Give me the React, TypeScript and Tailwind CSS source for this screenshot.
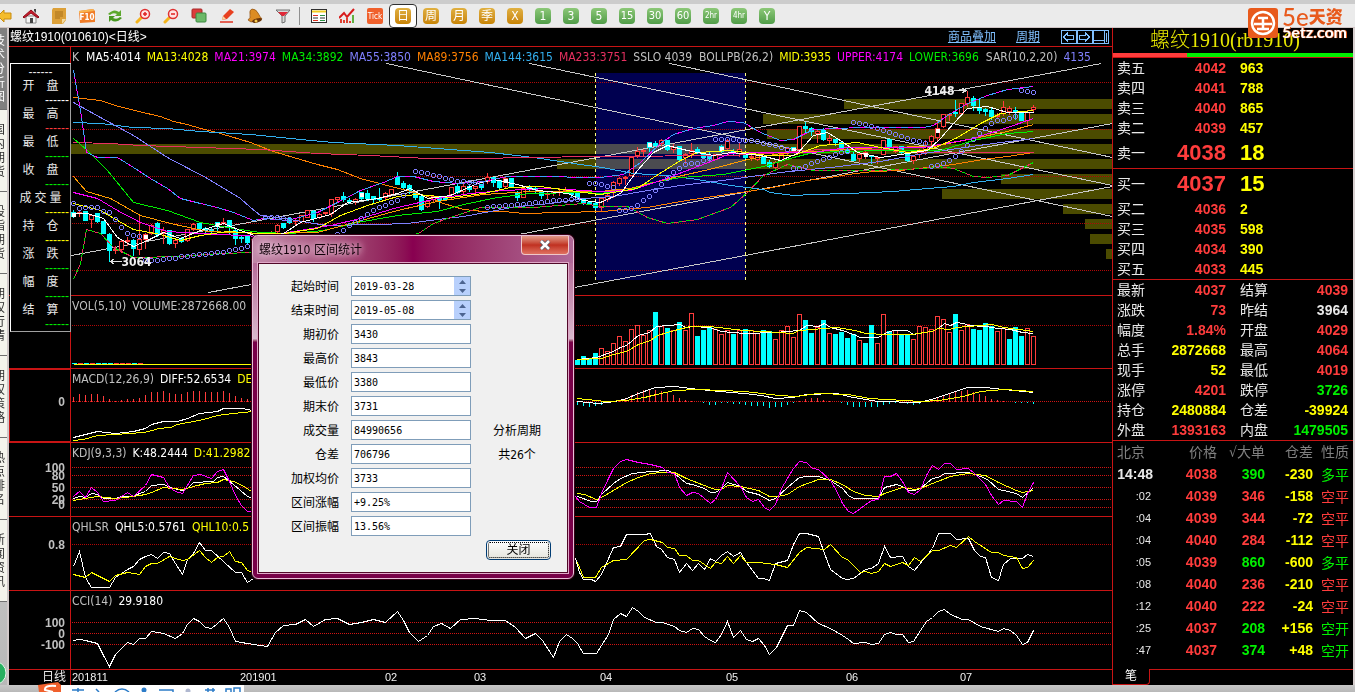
import React from "react";

const FIRST_X = 73;
const STEP = 6;
const VISIBLE_FROM = 84;

const UP = "#ff3c3c";
const DOWN = "#00ffff";

// high, top, bottom, low, 1 = up / 0 = down
const CANDLES: number[][] = [
  [209, 212, 216, 217, 0], [210, 212, 213, 216, 1], [211, 211, 220, 220, 0], [215, 215, 219, 227, 1],
  [213, 213, 221, 222, 0], [220, 221, 233, 233, 0], [232, 234, 250, 261, 0], [245, 249, 250, 253, 1],
  [238, 241, 249, 252, 1], [236, 240, 241, 245, 1], [238, 240, 248, 255, 0], [215, 239, 249, 254, 1],
  [232, 234, 239, 248, 1], [223, 225, 233, 234, 1], [221, 223, 234, 236, 0], [226, 230, 233, 243, 1],
  [229, 230, 243, 244, 0], [239, 240, 243, 247, 1], [236, 238, 241, 242, 0], [228, 229, 240, 241, 1],
  [222, 224, 229, 230, 1], [221, 223, 228, 229, 0], [226, 228, 229, 233, 0], [227, 230, 231, 233, 0],
  [221, 222, 226, 232, 0], [217, 222, 223, 224, 1], [219, 220, 227, 233, 0], [228, 230, 238, 244, 0],
  [235, 237, 238, 242, 0], [235, 236, 242, 243, 0], [238, 239, 242, 243, 1], [238, 239, 242, 243, 0],
  [237, 238, 240, 241, 1], [230, 232, 234, 236, 1], [223, 225, 231, 233, 1], [222, 223, 227, 228, 0],
  [216, 218, 222, 223, 0], [217, 220, 221, 224, 1], [214, 215, 221, 222, 1], [209, 210, 217, 217, 1],
  [209, 211, 218, 221, 0], [212, 214, 217, 218, 1], [211, 212, 213, 215, 1], [198, 199, 213, 216, 1],
  [196, 197, 199, 201, 1], [191, 196, 199, 201, 0], [197, 200, 201, 203, 0], [197, 199, 201, 204, 1],
  [191, 192, 198, 200, 0], [189, 193, 198, 200, 0], [195, 196, 199, 202, 0], [187, 198, 199, 200, 0],
  [191, 193, 197, 200, 1], [188, 189, 194, 195, 1], [171, 177, 184, 184, 0], [180, 183, 187, 188, 0],
  [183, 185, 190, 193, 0], [190, 192, 197, 199, 0], [194, 196, 209, 210, 0], [199, 201, 206, 207, 1],
  [194, 196, 199, 201, 1], [196, 197, 200, 208, 0], [195, 197, 199, 200, 0], [186, 187, 194, 198, 1],
  [183, 186, 192, 193, 0], [183, 186, 191, 193, 1], [184, 186, 189, 191, 0], [185, 186, 188, 192, 1],
  [183, 184, 187, 189, 0], [172, 177, 181, 183, 1], [176, 177, 182, 186, 0], [179, 180, 187, 188, 0],
  [176, 178, 186, 187, 1], [178, 178, 186, 186, 0], [190, 192, 197, 200, 0], [187, 188, 197, 197, 1],
  [184, 186, 188, 191, 0], [186, 188, 189, 193, 0], [189, 192, 195, 198, 0], [191, 193, 194, 198, 1],
  [190, 192, 193, 195, 1], [187, 191, 192, 195, 1], [186, 190, 191, 193, 1], [190, 193, 194, 197, 0],
  [190, 191, 197, 199, 0], [197, 198, 203, 204, 0], [200, 202, 203, 204, 0], [201, 203, 207, 209, 0],
  [196, 198, 207, 211, 1], [193, 195, 199, 201, 1], [180, 182, 190, 197, 1], [176, 178, 183, 185, 1],
  [175, 177, 178, 184, 1], [155, 157, 175, 175, 1], [146, 151, 155, 157, 1], [148, 150, 151, 155, 1],
  [141, 142, 147, 151, 0], [140, 143, 145, 146, 0], [138, 140, 143, 145, 1], [139, 140, 149, 150, 0],
  [143, 147, 149, 152, 1], [145, 146, 159, 160, 0], [152, 154, 157, 163, 1], [142, 150, 153, 157, 1],
  [146, 149, 152, 153, 0], [153, 154, 157, 158, 0], [150, 156, 158, 160, 0], [153, 154, 159, 159, 1],
  [144, 146, 151, 152, 0], [138, 140, 148, 149, 1], [148, 151, 153, 155, 0], [142, 149, 153, 156, 1],
  [151, 153, 157, 158, 0], [153, 156, 157, 160, 1], [153, 154, 159, 160, 1], [155, 156, 163, 163, 0],
  [159, 162, 166, 167, 0], [160, 162, 167, 168, 1], [153, 154, 160, 161, 1], [146, 148, 151, 155, 1],
  [146, 147, 150, 152, 0], [125, 126, 149, 150, 1], [121, 126, 128, 133, 0], [126, 128, 131, 135, 0],
  [128, 131, 133, 142, 1], [127, 130, 139, 140, 0], [134, 138, 140, 144, 1], [138, 139, 142, 145, 0],
  [141, 142, 148, 149, 0], [146, 149, 152, 153, 0], [151, 154, 160, 160, 0], [151, 154, 158, 161, 1],
  [150, 152, 154, 158, 1], [154, 155, 156, 163, 0], [155, 157, 158, 163, 1], [139, 140, 154, 154, 1],
  [138, 139, 147, 148, 0], [146, 146, 151, 152, 1], [145, 146, 152, 153, 0], [152, 153, 160, 161, 0],
  [154, 156, 160, 163, 1], [148, 150, 154, 157, 1], [139, 146, 150, 154, 1], [134, 136, 141, 145, 1],
  [120, 128, 137, 140, 1], [114, 114, 126, 127, 1], [112, 114, 115, 120, 1], [99, 112, 113, 116, 0],
  [102, 103, 113, 113, 1], [90, 97, 103, 106, 1], [95, 98, 105, 110, 0], [98, 108, 110, 113, 0],
  [107, 109, 111, 115, 0], [106, 110, 116, 119, 0], [112, 115, 116, 118, 1], [100, 107, 113, 115, 1],
  [105, 108, 111, 114, 1], [106, 110, 112, 119, 0], [110, 111, 120, 120, 0], [109, 112, 120, 125, 1],
  [104, 107, 109, 111, 1],
];

// candles marked with a white block
const MARKED = [0, 12, 24, 48, 72, 96, 108, 120, 132, 144];

// parabolic stop, one value per candle, 0 = not drawn
const SAR = [
  203, 208, 207, 207, 207, 211, 212, 219, 227, 233, 235, 236, 260, 260, 260, 259, 258, 258, 256, 256,
  255, 254, 254, 253, 252, 252, 250, 249, 248, 246, 0, 0, 217, 217, 217, 218, 219, 0, 0, 0,
  0, 0, 0, 0, 234, 230, 225, 222, 218, 214, 210, 207, 205, 202, 200, 195, 0, 171, 172, 173,
  175, 176, 178, 179, 181, 181, 182, 182, 183, 207, 206, 206, 205, 205, 204, 204, 203, 202, 202, 201,
  200, 200, 200, 199, 199, 0, 183, 183, 184, 186, 187, 210, 210, 208, 205, 200, 196, 190, 184, 178,
  172, 168, 164, 163, 163, 160, 158, 139, 139, 139, 139, 140, 140, 140, 141, 143, 144, 145, 147, 149,
  168, 168, 166, 163, 161, 159, 157, 154, 152, 151, 122, 123, 124, 126, 128, 130, 132, 134, 136, 138,
  140, 141, 143, 166, 165, 163, 160, 156, 151, 145, 139, 133, 128, 123, 120, 120, 118, 116, 90, 91,
  92,
];

const BANDS = [
  [844, 99], [763, 114], [767, 129], [71, 144], [557, 159], [1001, 174],
  [942, 189], [1063, 204], [1085, 219], [1090, 234], [1106, 249],
];

const TREND_LINES = [
  "386,63 1112,216",
  "529,63 1112,185",
  "669,63 1112,157",
  "71,255 1101,63",
  "208,292 1112,123",
  "574,287 1112,186",
];

const UPPER_LINE =
  "73,70 80,110 86,152 97,157 117,157 133,167 150,178 167,188 180,198 200,203 217,207 233,212 253,220 263,218 287,220 317,212 337,202 360,190 383,182 397,176 413,176 433,181 457,183 483,181 507,176 550,176 583,177 600,177 623,174 640,162 660,143 673,134 693,128 713,125 727,121 743,122 760,132 780,140 793,139 813,129 860,127 923,127 933,125 947,115 967,103 987,95 1007,89 1033,86";
const LOWER_LINE =
  "73,279 80,263 86,229 100,233 113,247 133,257 180,256 220,253 253,252 330,250 418,233 433,223 450,217 480,207 533,207 583,203 600,206 627,206 647,217 667,223 697,219 730,207 747,192 763,175 787,164 813,170 880,170 923,168 937,166 953,168 973,176 987,177 1007,175 1033,162";

const PRICE_LINES: [string, string][] = [
  ["#ff8000", "73,97 100,100 115,105 138,111 160,116 173,121 187,124 200,128 213,131 230,136 250,142 273,151 293,157 317,164 337,169 360,178 383,184 410,191 427,196 443,203 463,209 483,211 503,211 523,213 560,212 602,211 623,209 647,207 680,201 713,196 747,191 767,188 787,184 807,180 830,177 847,174 873,171 900,170 927,167 953,164 983,159 1007,156 1033,152"],
  ["#33b0f0", "73,122 100,123 133,127 167,128 200,131 250,134 300,139 333,142 397,145 450,149 490,152 533,157 560,161 580,164 602,167 633,173 667,175 697,179 730,185 763,189 770,192 793,195 813,194 847,193 893,191 927,188 953,186 973,182 1007,178 1033,174"],
  ["#e83060", "73,142 110,143 140,145 200,147 260,149 317,153 370,155 427,158 483,158 523,157 600,156 730,155 767,153 820,149 900,149 907,152 1033,152"],
  ["#8080ff", "73,102 100,117 133,135 167,157 207,178 240,198 250,207 260,215 283,218 307,222 327,225 377,224 407,223 437,219 463,216 490,211 517,206 550,203 583,198 613,196 647,190 680,185 730,179 780,172 830,167 880,161 923,153 957,148 1000,142 1033,138"],
  ["#00f000", "73,138 87,150 107,170 133,202 167,210 200,222 233,228 260,232 290,233 323,230 357,222 397,215 437,211 463,204 497,197 530,193 583,192 600,193 630,189 647,183 680,177 723,174 763,166 793,157 813,152 880,150 940,150 973,140 1007,133 1033,131"],
  ["#ff9c00", "73,176 86,191 110,198 140,215 170,223 207,231 260,233 317,232 350,223 397,210 437,201 483,194 530,191 600,191 630,188 673,177 713,168 747,159 780,153 830,150 880,147 933,146 973,138 1007,131 1033,124"],
  ["#ff00ff", "73,192 97,198 117,210 140,222 167,231 200,233 260,236 300,230 330,225 360,218 397,207 437,198 470,193 503,190 550,188 600,191 630,190 663,179 713,160 730,153 767,152 813,152 847,147 923,147 973,138 1007,127 1033,118"],
  ["#ffff00", "73,203 100,210 117,220 133,229 160,234 180,240 200,235 227,231 260,233 283,233 317,228 340,215 367,205 397,196 417,194 450,197 483,193 510,187 540,186 583,192 600,194 637,188 653,177 680,160 697,152 730,150 767,155 793,155 820,145 857,142 880,147 907,152 933,148 957,137 980,123 1000,113 1033,110"],
  ["#ffffff", "73,213 87,213 103,218 117,237 133,246 147,240 163,232 180,238 200,230 223,223 240,230 260,237 283,233 300,222 330,214 347,202 377,198 397,193 410,188 427,198 450,195 477,183 493,179 517,184 537,190 567,193 583,200 600,202 620,193 637,170 653,152 667,145 687,150 713,155 730,152 760,155 780,160 797,153 813,135 827,132 843,142 857,152 880,157 907,153 927,150 940,138 953,123 967,108 987,106 1007,112 1033,112"],
];

// bar top, 1 = up / 0 = down, starting at candle 84
const VOLUME: number[][] = [
  [360, 0], [356, 0], [359, 0], [353, 0], [348, 1], [351, 1], [343, 1], [336, 1], [341, 1], [329, 1],
  [325, 1], [335, 1], [330, 1], [312, 0], [326, 1], [328, 0], [330, 1], [322, 0], [330, 1], [313, 1],
  [336, 0], [330, 0], [326, 0], [329, 1], [334, 1], [330, 1], [334, 0], [330, 1], [329, 0], [330, 1],
  [333, 1], [330, 0], [331, 0], [339, 1], [330, 1], [326, 1], [337, 1], [314, 1], [320, 0], [333, 0],
  [327, 1], [320, 0], [333, 1], [334, 0], [332, 0], [338, 0], [334, 0], [340, 1], [343, 0], [325, 0],
  [343, 1], [314, 1], [331, 0], [330, 1], [334, 0], [335, 0], [339, 1], [326, 1], [327, 1], [329, 1],
  [316, 1], [319, 1], [332, 1], [314, 0], [330, 1], [324, 1], [329, 0], [330, 0], [323, 0], [326, 0],
  [331, 1], [328, 1], [339, 0], [327, 0], [336, 0], [328, 1], [336, 1],
];

const MACD_LEFT = [
  5, 8, 7, 8, 8, 6, 3, 1, 2, 3, 3, 4, 7, 10, 10, 11, 9, 8, 8, 10, 11, 11, 10, 10, 10, 11, 9, 6, 4, 3,
];
const MACD_RIGHT = [
  -3, -4, -5, -4, -3, -1, 0, 2, 3, 7, 10, 12, 12, 12, 11, 10, 7, 4, 2, 1, 0, -1, -3, -3, -1, -1, -2,
  -2, -3, -4, -4, -4, -6, -5, -5, -3, -1, 1, 3, 4, 4, 2, 1, 0, -1, -3, -5, -5, -5, -5, -5, -3, -2,
  -1, -1, -2, -3, -2, 1, 2, 4, 6, 8, 10, 11, 12, 10, 8, 6, 3, 2, 1, 0, -1, -1, -1, -2,
];

const VOL_LINES: [string, string][] = [
  ["#ffff00", "73,364 252,364"],
  ["#ffffff", "577,359 596,357 613,351 620,347 626,345 632,340 638,335 649,332 656,326 679,324 686,327 692,326 709,327 721,331 744,333 775,332 799,330 806,325 818,326 824,323 830,327 842,330 853,334 860,337 878,337 884,333 893,330 907,330 913,334 931,331 938,328 944,323 950,325 956,322 963,323 968,325 985,326 998,328 1010,329 1022,332 1033,333"],
  ["#ffff00", "577,359 601,358 613,354 626,351 638,344 650,340 657,335 674,330 690,326 709,326 744,330 779,332 792,333 799,330 836,327 855,330 865,333 885,334 911,334 931,331 938,328 949,329 956,327 991,324 1004,327 1033,331"],
];

const MACD_LINES: [string, string][] = [
  ["#ffffff", "73,437 85,434 97,431 115,433 133,431 145,428 151,424 163,421 177,421 187,418 199,413 217,411 223,408 242,408 252,410"],
  ["#ffff00", "73,440 83,439 97,435 115,434 143,432 152,430 158,428 170,427 177,424 193,421 203,419 217,415 233,413 252,411"],
  ["#ffffff", "577,401 598,403 615,401 626,398 638,393 655,387 674,386 699,389 719,391 744,393 761,395 775,398 792,397 806,394 836,393 853,397 878,401 918,402 931,399 949,393 967,387 985,387 1003,389 1033,392"],
  ["#ffff00", "577,398 605,401 626,400 644,397 656,394 674,390 697,389 744,391 779,395 796,396 817,393 848,394 869,398 921,401 938,400 963,396 980,391 1004,389 1033,391"],
];

const KDJ_LINES: [string, string][] = [
  ["#ffffff", "73,498 79,496 85,497 91,493 97,494 103,498 115,498 121,496 133,496 139,493 145,491 151,485 163,484 173,488 182,490 187,488 193,482 213,481 217,477 223,476 233,484 247,496 252,498"],
  ["#ffff00", "73,500 85,498 97,496 115,498 133,496 145,494 151,492 163,487 182,489 193,486 205,483 217,482 223,479 233,481 242,485 251,491"],
  ["#ff00ff", "73,496 79,491 85,497 91,487 97,492 103,501 115,500 121,496 127,492 133,496 145,485 151,474 163,477 169,487 175,491 182,493 193,475 200,474 211,478 217,471 223,469 229,481 235,495 241,505 247,511 252,511"],
  ["#ffffff", "577,496 591,501 596,501 601,494 613,483 620,478 632,473 650,471 667,470 674,473 686,483 692,484 704,488 710,492 715,492 721,488 727,482 740,486 746,491 758,494 769,500 775,498 787,487 799,477 806,476 818,476 830,480 842,488 848,495 853,498 878,498 884,487 896,484 902,486 908,490 914,490 920,488 932,478 938,477 944,473 968,472 980,476 987,479 998,489 1003,490 1016,493 1022,497 1033,487"],
  ["#ffff00", "577,493 584,494 596,499 601,497 613,490 626,482 638,477 650,473 662,472 674,472 686,478 709,487 715,489 721,489 727,485 740,486 758,490 769,496 777,496 787,494 799,486 818,479 830,479 842,484 853,491 865,495 878,496 884,493 902,487 914,489 920,488 932,483 950,476 968,473 985,475 998,482 1016,490 1022,492 1033,490"],
  ["#ff00ff", "575,496 579,501 589,507 596,507 601,493 608,478 613,468 620,461 626,459 638,462 650,464 662,467 667,472 674,473 679,487 686,495 692,492 698,493 710,503 715,499 721,488 727,472 740,486 746,497 752,501 758,499 764,507 769,510 775,504 781,488 793,468 799,461 806,462 812,468 818,469 830,480 836,490 842,503 848,511 853,513 860,508 871,500 878,499 884,476 890,476 896,473 902,481 908,492 914,494 920,489 926,475 932,465 938,469 944,463 950,463 956,469 968,468 974,473 985,484 991,495 998,504 1003,500 1016,501 1022,507 1027,493 1033,482"],
];

const QHL_LINES: [string, string][] = [
  ["#ffffff", "73,566 79,551 85,577 91,587 109,587 115,577 127,569 133,566 139,559 145,556 151,554 157,558 163,552 169,553 175,563 182,574 187,559 193,553 199,542 205,550 211,550 235,572 241,572 247,582 253,578"],
  ["#ffff00", "73,574 85,577 91,572 109,581 115,575 127,572 139,574 145,566 151,563 157,563 169,556 175,558 182,560 187,559 199,550 205,557 211,562 217,557 223,556 229,551 235,561 241,562 247,570 252,572"],
  ["#ffffff", "575,558 579,572 583,579 591,579 595,581 601,574 613,547 620,546 626,534 644,534 650,533 656,546 661,549 667,557 674,559 679,572 686,563 692,570 698,563 704,569 710,558 715,561 721,555 727,551 733,556 740,552 746,562 758,578 763,578 769,580 775,563 787,560 793,544 799,533 806,533 818,536 824,553 830,569 842,578 847,579 853,578 865,569 871,568 878,563 884,546 890,557 902,556 908,566 914,570 932,548 938,533 950,533 956,539 968,538 974,550 980,556 985,557 991,577 998,580 1003,564 1010,558 1022,558 1027,554 1033,556"],
  ["#ffff00", "577,562 583,577 595,577 601,567 613,560 626,559 644,540 650,539 662,542 667,547 674,548 679,555 686,555 692,560 698,560 710,568 715,562 721,563 727,556 733,563 740,555 746,562 758,562 775,564 787,567 799,552 806,547 824,549 830,544 842,557 847,559 860,572 865,571 871,573 878,571 884,563 890,566 902,562 908,565 914,557 920,561 932,550 938,550 950,545 956,547 968,536 974,541 991,552 998,552 1003,555 1016,557 1022,568 1027,567 1033,560"],
];

const CCI_LINES: [string, string][] = [
  ["#ffffff", "73,640 79,639 85,640 97,643 103,655 109,666 115,654 127,642 133,644 139,638 145,638 151,631 163,633 175,638 182,633 187,624 193,618 199,621 205,627 211,628 217,623 223,618 229,627 235,641 247,643 260,645 267,646 275,632 283,625 295,624 305,619 313,626 325,619 337,618 349,624 361,622 373,619 385,622 397,611 403,620 409,632 418,641 427,635 433,626 441,623 450,628 460,619 475,618 490,620 505,620 515,627 525,638 535,633 542,640 553,657 559,641 566,634 572,638 577,643 583,653 596,653 608,634 613,619 620,613 626,616 632,607 638,611 644,617 656,622 662,622 674,626 679,630 686,632 692,628 698,629 704,636 710,640 715,642 721,634 727,621 733,637 740,630 746,639 752,641 758,638 764,645 769,654 776,647 787,625 793,625 799,610 806,612 818,623 830,628 842,635 848,639 853,643 865,642 871,644 878,643 884,634 890,632 896,634 902,634 908,642 913,641 920,630 926,621 932,617 938,611 944,609 950,614 962,619 968,619 980,626 998,631 1003,628 1010,630 1016,635 1022,644 1027,642 1033,630"],
];

const LEGEND_PRICE: [string, string][] = [
  ["K", "pr-px text-[#c0c0c0]"],
  ["MA5:4014", "text-white"],
  ["MA13:4028", "text-[#ffff00]"],
  ["MA21:3974", "text-[#ff00ff]"],
  ["MA34:3892", "text-[#00f000]"],
  ["MA55:3850", "text-[#8080ff]"],
  ["MA89:3756", "text-[#ff8000]"],
  ["MA144:3615", "text-[#33b0f0]"],
  ["MA233:3751", "text-[#e83060]"],
  ["SSLO 4039", "pr-px text-[#c0c0c0]"],
  ["BOLLPB(26,2)", "text-[#c0c0c0]"],
  ["MID:3935", "text-[#ffff00]"],
  ["UPPER:4174", "text-[#ff00ff]"],
  ["LOWER:3696", "text-[#00f000]"],
  ["SAR(10,2,20)", "pl-px text-[#c0c0c0]"],
  ["4135", "text-[#8080ff]"],
];

const TIP_ROWS: [string, string][] = [
  ["开盘", "text-white"],
  ["最高", "text-[#ff3c3c]"],
  ["最低", "text-[#00f000]"],
  ["收盘", "text-[#00f000]"],
  ["成交量", "text-[#ffff00]"],
  ["持仓", "text-[#ffff00]"],
  ["涨跌", "text-[#00f000]"],
  ["幅度", "text-[#00f000]"],
  ["结算", "text-[#00f000]"],
];

const SELLS = [["卖五", "4042", "963"], ["卖四", "4041", "788"], ["卖三", "4040", "865"], ["卖二", "4039", "457"], ["卖一", "4038", "18"]];
const BUYS = [["买一", "4037", "15"], ["买二", "4036", "2"], ["买三", "4035", "598"], ["买四", "4034", "390"], ["买五", "4033", "445"]];

const RED = "text-[#ff3c3c]";
const GREEN = "text-[#00f000]";
const YELLOW = "text-[#ffff00]";

const STATS = [
  ["最新", "4037", RED, "结算", "4039", RED],
  ["涨跌", "73", RED, "昨结", "3964", "text-[#e8e8e8]"],
  ["幅度", "1.84%", RED, "开盘", "4029", RED],
  ["总手", "2872668", YELLOW, "最高", "4064", RED],
  ["现手", "52", YELLOW, "最低", "4019", RED],
  ["涨停", "4201", RED, "跌停", "3726", GREEN],
  ["持仓", "2480884", YELLOW, "仓差", "-39924", YELLOW],
  ["外盘", "1393163", RED, "内盘", "1479505", GREEN],
];

const TICKS = [
  ["14:48", "4038", "390", GREEN, "-230", "多平", GREEN],
  [":02", "4039", "346", RED, "-158", "空平", RED],
  [":04", "4039", "344", RED, "-72", "空平", RED],
  [":04", "4040", "284", RED, "-112", "空平", RED],
  [":05", "4039", "860", GREEN, "-600", "多平", GREEN],
  [":08", "4040", "236", RED, "-210", "空平", RED],
  [":12", "4040", "222", RED, "-24", "空平", RED],
  [":25", "4037", "208", GREEN, "+156", "空开", GREEN],
  [":47", "4037", "374", GREEN, "+48", "空开", GREEN],
];

const SIDE_TABS = ["技术分析图", "国内期货", "股指期货", "期权行情", "期权策略", "热点排名", "新闻资讯"];

const candleX = (i: number) => FIRST_X + STEP * i;

const Polylines: React.FC<{ lines: [string, string][] }> = ({ lines }) => (
  <>
    {lines.map(([color, points], i) => (
      <polyline key={i} points={points} fill="none" stroke={color} />
    ))}
  </>
);

const GridLines: React.FC<{ ys: number[]; color?: string }> = ({ ys, color = "#d01414" }) => (
  <g transform="translate(-0.5 0)">
    {ys.map((y) => (
      <line key={y} x1="72" x2="1111" y1={y} y2={y} stroke={color} strokeDasharray="1 1" />
    ))}
  </g>
);

type PanelProps = {
  top: number;
  height: number;
  heightClass: string;
  legend: [string, string][];
  axis?: [string, number][];
  active?: boolean;
  children: React.ReactNode;
};

const Panel: React.FC<PanelProps> = ({ top, height, heightClass, legend, axis = [], active, children }) => (
  <section className={`flex border-b border-[#c81414] ${heightClass}`}>
    <div className={`w-[62px] shrink-0 border-r border-[#c81414] ${active ? "outline-1 -outline-offset-1 outline-[#c81414]" : ""}`}>
      <svg className="h-full w-full" viewBox={`9 ${top} 61 ${height}`} aria-hidden="true">
        {axis.map(([label, y]) => (
          <text
            key={label}
            x="65"
            y={y + 4}
            textAnchor="end"
            fill="#c0c0c0"
            className="font-[Liberation_Sans] text-[12px] font-bold"
          >
            {label}
          </text>
        ))}
      </svg>
    </div>
    <div className="grid min-w-0 flex-1">
      <svg
        className="h-full w-full [grid-area:1/1]"
        viewBox={`71 ${top} 1041 ${height}`}
        preserveAspectRatio="xMinYMid meet"
        shapeRendering="crispEdges"
      >
        <g transform="translate(0.5 0.5)">{children}</g>
      </svg>
      <div className="flex h-5 gap-1.5 overflow-hidden pl-px text-[12px] leading-5 whitespace-nowrap [grid-area:1/1]">
        {legend.map(([text, cls]) => (
          <span key={text} className={cls}>
            {text}
          </span>
        ))}
      </div>
    </div>
  </section>
);

const PriceChart: React.FC = () => (
  <>
    <rect x="595" y="72" width="150" height="207" fill="#000050" />
    <g className="mix-blend-screen" transform="translate(-0.5 -0.5)">
      {BANDS.map(([x, y]) => (
        <rect key={y} x={x} y={y} width={1112 - x} height="10" fill="#4b4b00" />
      ))}
    </g>
    <GridLines ys={[82, 129, 176, 223, 270]} color="#b00808" />
    {TREND_LINES.map((points) => (
      <polyline key={points} points={points} fill="none" stroke="#c8c8c8" />
    ))}
    <line x1="595" x2="595" y1="72" y2="279" stroke="#ffff80" strokeDasharray="3 3" />
    <line x1="745" x2="745" y1="72" y2="279" stroke="#ffff80" strokeDasharray="3 3" />
    {CANDLES.map(([high, top, bottom, low, up], i) => {
      const x = candleX(i);
      const color = up ? UP : DOWN;
      return (
        <g key={i} stroke={color}>
          <line x1={x} x2={x} y1={high} y2={top} />
          <line x1={x} x2={x} y1={bottom} y2={low} />
          <rect x={x - 2} y={top} width="4" height={Math.max(bottom - top, 1)} fill={up ? "#000" : color} />
        </g>
      );
    })}
    {MARKED.map((i) => (
      <rect key={i} x={candleX(i) - 2} y={CANDLES[i][1]} width="4" height="4" fill="#fff" />
    ))}
    <Polylines lines={PRICE_LINES} />
    <polyline points={UPPER_LINE} fill="none" stroke="#ff00ff" />
    <polyline points={UPPER_LINE} fill="none" stroke="#40a0ff" strokeDasharray="7 5" />
    <polyline points={LOWER_LINE} fill="none" stroke="#e83060" />
    <polyline points={LOWER_LINE} fill="none" stroke="#00e000" strokeDasharray="4 4" />
    <g fill="none" stroke="#8080ff">
      {SAR.map((y, i) => (y ? <rect key={i} x={candleX(i) - 2} y={y - 2} width="4" height="4" rx="2" /> : null))}
    </g>
    <g fill="none" stroke="#e0e0e0">
      <path d="M110 261h11M110 261l4 -3M110 261l4 3" />
      <path d="M957 90h9M966 90l-4 -2M966 90l-4 2" />
    </g>
    <g fill="#f0f0f0" className="text-[12px] font-bold">
      <text x="121" y="265">3064</text>
      <text x="924" y="94">4148</text>
    </g>
  </>
);

const VolumeChart: React.FC = () => (
  <>
    <GridLines ys={[325]} color="#b00808" />
    {CANDLES.slice(0, 12).map((candle, i) => (
      <line
        key={i}
        x1={candleX(i) - 2}
        x2={candleX(i) + 3}
        y1="363"
        y2="363"
        stroke={candle[4] ? UP : DOWN}
      />
    ))}
    {VOLUME.map(([top, up], i) => (
      <rect
        key={i}
        x={candleX(i + VISIBLE_FROM) - 2}
        y={top}
        width="4"
        height={364 - top}
        stroke={up ? UP : DOWN}
        fill={up ? "#000" : DOWN}
      />
    ))}
    <Polylines lines={VOL_LINES} />
  </>
);

const MacdChart: React.FC = () => (
  <>
    <GridLines ys={[401]} />
    {MACD_LEFT.map((h, i) => (
      <line key={i} x1={candleX(i)} x2={candleX(i)} y1={401 - h} y2="401" stroke={UP} />
    ))}
    {MACD_RIGHT.map((h, i) => {
      const x = candleX(i + VISIBLE_FROM);
      return <line key={i} x1={x} x2={x} y1={401 - h} y2="401" stroke={h > 0 ? UP : DOWN} />;
    })}
    <Polylines lines={MACD_LINES} />
  </>
);

const DATES: [string, number][] = [
  ["201811", 72], ["201901", 240], ["02", 385], ["03", 474], ["04", 600], ["05", 726], ["06", 846], ["07", 960],
];

const ToolButton: React.FC<{ label: string; children: React.ReactNode }> = ({ label, children }) => (
  <button type="button" aria-label={label} className="flex h-6 w-7 shrink-0 items-center justify-center">
    <svg viewBox="0 0 16 16" className="size-4">
      {children}
    </svg>
  </button>
);

const PeriodButton: React.FC<{ text: string; gold?: boolean; active?: boolean }> = ({ text, gold, active }) => (
  <button
    type="button"
    className={`flex h-6 w-7 shrink-0 items-center justify-center ${active ? "rounded border border-[#303030] bg-white" : ""}`}
  >
    <span
      className={`flex size-4 items-center justify-center rounded-sm leading-4 text-white ${
        gold ? "bg-linear-to-b from-[#e0b040] to-[#c88400]" : "bg-linear-to-b from-[#8cc878] to-[#509c48]"
      } ${text.length > 2 ? "text-[8px]" : text.length > 1 ? "text-[11px]" : "text-[12px]"}`}
    >
      {text}
    </span>
  </button>
);

const Toolbar: React.FC = () => (
  <header className="border-t-4 border-b border-t-[#cccccc] border-b-[#d0c4c4] bg-[#ebebeb]">
    <div className="flex h-[23px] items-center">
      <button type="button" aria-label="后退" className="flex w-[17px] shrink-0">
        <svg viewBox="0 0 17 16" className="h-4 w-[17px]">
          <path d="M-2 8l6 -6v3h7v6H4v3z" fill="#f4bc2c" stroke="#c88c10" />
        </svg>
      </button>
      <ToolButton label="首页">
        <path d="M3 8h10v7H3z" fill="#f4f4f4" stroke="#888" />
        <path d="M0 9l8 -7l8 7l-1 1l-7 -5l-7 5z" fill="#c81c2c" stroke="#900c18" />
        <path d="M7 10h3v5H7z" fill="#444" />
        <path d="M11 1h2v4l-2 -2z" fill="#444" />
      </ToolButton>
      <ToolButton label="文档">
        <path d="M2 0h13v12l-3 4H1V2z" fill="#dca038" />
        <path d="M4 4h8M4 6h8M4 8h8M4 10h5" stroke="#a87018" />
        <path d="M15 11l-4 5v-5z" fill="#f4dca0" />
      </ToolButton>
      <ToolButton label="F10">
        <path d="M0 3l14 -2l2 2v11l-15 1z" fill="#f07c28" />
        <path d="M0 3l14 -2l1 2l-15 2z" fill="#f8b450" />
        <text x="8" y="12" textAnchor="middle" fill="#fff" className="text-[8px] font-bold">F10</text>
      </ToolButton>
      <ToolButton label="刷新">
        <path d="M1 6q6 -6 11 -2l2 -2v6H8l2 -2q-4 -2 -7 1z" fill="#5ca82c" />
        <path d="M15 10q-6 6 -11 2l-2 2V8h6l-2 2q4 2 7 -1z" fill="#489820" />
      </ToolButton>
      <ToolButton label="放大">
        <path d="M2 14l5 -5" stroke="#f4b41c" strokeWidth="3" strokeLinecap="round" />
        <circle cx="10" cy="6" r="4.5" fill="#ffe4e4" stroke="#e03030" strokeWidth="1.5" />
        <path d="M8 6h4M10 4v4" stroke="#e02020" strokeWidth="1.5" />
      </ToolButton>
      <ToolButton label="缩小">
        <path d="M2 14l5 -5" stroke="#f4b41c" strokeWidth="3" strokeLinecap="round" />
        <circle cx="10" cy="6" r="4.5" fill="#ffe4e4" stroke="#e03030" strokeWidth="1.5" />
        <path d="M8 6h4" stroke="#e02020" strokeWidth="1.5" />
      </ToolButton>
      <ToolButton label="叠加">
        <rect x="1" y="1" width="10" height="9" rx="1" fill="#dc3c3c" stroke="#a82828" />
        <rect x="5" y="5" width="10" height="9" rx="1" fill="#6cb868" stroke="#3c8840" />
      </ToolButton>
      <ToolButton label="画线">
        <path d="M3 12l1 -4l7 -7l4 3l-7 7z" fill="#e84020" />
        <path d="M3 12l1 -4l3 3z" fill="#f8d8a0" />
        <path d="M1 14h13" stroke="#e03020" strokeWidth="1.5" />
      </ToolButton>
      <ToolButton label="预警">
        <path d="M5 1q4 0 6 4t4 6l-11 3l-3 -2q3 -2 2 -6t2 -5z" fill="#dc8c24" stroke="#8c4c0c" strokeWidth="0.7" />
        <ellipse cx="10" cy="12.5" rx="5" ry="2" fill="#683408" transform="rotate(-15 10 12.5)" />
        <circle cx="9" cy="13" r="1.5" fill="#f8cc50" />
      </ToolButton>
      <ToolButton label="筛选">
        <path d="M1 2h14l-5 6v6l-3 1V8z" fill="#d8d8d8" stroke="#707070" />
        <path d="M3 4h10l-4 4H7z" fill="#e02838" />
      </ToolButton>
      <div className="mr-[5px] ml-[2px] h-[18px] w-px shrink-0 bg-[#909090]" />
      <ToolButton label="报价">
        <rect x="0.5" y="1.5" width="15" height="13" fill="#fff" stroke="#303030" />
        <path d="M1 3.5h14" stroke="#f0cc20" strokeWidth="2" />
        <path d="M2 7.5h5M2 12.5h5" stroke="#e03020" />
        <path d="M9 7.5h5M9 12.5h5" stroke="#289040" />
        <path d="M2 10h5M9 10h5" stroke="#303030" />
      </ToolButton>
      <ToolButton label="走势">
        <path d="M2 15v-4M5 15v-3M8 15v-5M11 15v-2" stroke="#e04030" strokeWidth="2" />
        <path d="M14 15V7" stroke="#60b040" strokeWidth="2" />
        <path d="M0 10l5 -5l3 4l7 -8" fill="none" stroke="#d81c1c" strokeWidth="2" />
      </ToolButton>
      <ToolButton label="Tick">
        <rect width="16" height="16" rx="2" fill="#f0602c" />
        <text x="8" y="11" textAnchor="middle" fill="#fff" className="text-[8px]">Tick</text>
      </ToolButton>
      <PeriodButton text="日" gold active />
      <PeriodButton text="周" gold />
      <PeriodButton text="月" gold />
      <PeriodButton text="季" gold />
      <PeriodButton text="X" gold />
      {["1", "3", "5", "15", "30", "60", "2hr", "4hr", "Y"].map((text) => (
        <PeriodButton key={text} text={text} />
      ))}
    </div>
  </header>
);

const SideTabs: React.FC = () => (
  <nav className="flex w-[9px] shrink-0 flex-col overflow-hidden border-r-2 border-[#d0c8c8] bg-linear-to-b from-[#f4f4ec] to-[#b8b8b8]">
    {SIDE_TABS.map((tab, i) => (
      <button
        type="button"
        key={tab}
        className={`flex h-[82px] shrink-0 items-center justify-end overflow-hidden border-b border-[#707070] pr-[2px] text-[12px] leading-[14px] ${
          i === 0 ? "bg-[#808080] text-white" : "bg-[#f4f4ec] text-[#303030]"
        }`}
      >
        <span className="w-3 shrink-0">{tab}</span>
      </button>
    ))}
    <svg viewBox="0 0 7 28" className="mt-auto h-7 w-[7px] shrink-0">
      <circle cx="-6" cy="16" r="12" fill="#28b060" stroke="#e8f8ec" />
    </svg>
  </nav>
);

const TipBox: React.FC = () => (
  <div className="absolute top-[35px] left-px w-[61px] border border-t-white border-r-[#a0a0a0] border-b-[#a0a0a0] border-l-white bg-black text-[12px] text-[#e8e8e8]">
    <div className="h-[15px] text-center font-[Liberation_Sans] leading-[17px]">------</div>
    {TIP_ROWS.map(([label, color]) => (
      <div key={label} className="flex h-7 flex-col">
        <div className={`mx-auto flex justify-between leading-[14px] ${label.length > 2 ? "w-[42px]" : "w-9"}`}>
          {label.split("").map((char) => (
            <span key={char}>{char}</span>
          ))}
        </div>
        <div className={`pr-px text-right font-[Liberation_Sans] leading-[14px] ${color}`}>------</div>
      </div>
    ))}
  </div>
);

const ChartArea: React.FC = () => (
  <main className="relative min-w-0 flex-1">
    <div className="flex h-[19px] items-center border-b border-[#c81414] text-[12px]">
      <h1 className="pl-px font-[Liberation_Sans,'Noto_Sans_CJK_SC'] text-white">螺纹1910(010610)&lt;日线&gt;</h1>
      <a href="#overlay" className="mr-5 ml-auto text-[#80c0ff] underline">商品叠加</a>
      <a href="#period" className="mr-5 text-[#80c0ff] underline">周期</a>
      <svg viewBox="0 0 51 15" className="h-[15px] w-[52px]" fill="none" stroke="#80c0ff" shapeRendering="crispEdges">
        <path d="M0.5 0.5h15v13h-15zM16.5 0.5h15v13h-15zM32.5 0.5h15v13h-15zM33 10.5h10M43.5 1v13" />
        <path d="M3 7l4 -4v2h6v4H7v2zM29 7l-4 -4v2h-6v4h6v2zM45.5 3v9" />
      </svg>
    </div>
    <Panel top={47} height={248} heightClass="h-[249px]" legend={LEGEND_PRICE}>
      <PriceChart />
    </Panel>
    <Panel
      top={296}
      height={72}
      heightClass="h-[73px]"
      legend={[["VOL(5,10)", "text-[#c0c0c0]"], ["VOLUME:2872668.00", "text-[#c0c0c0]"]]}
    >
      <VolumeChart />
    </Panel>
    <Panel
      top={369}
      height={73}
      heightClass="h-[74px]"
      active
      axis={[["0", 402]]}
      legend={[["MACD(12,26,9)", "text-[#c0c0c0]"], ["DIFF:52.6534", "text-white"], ["DEA", "text-[#ffff00]"]]}
    >
      <MacdChart />
    </Panel>
    <Panel
      top={443}
      height={73}
      heightClass="h-[74px]"
      axis={[["100", 468], ["80", 476], ["50", 488], ["20", 500], ["0", 505]]}
      legend={[["KDJ(9,3,3)", "text-[#c0c0c0]"], ["K:48.2444", "text-white"], ["D:41.2982", "text-[#ffff00]"]]}
    >
      <GridLines ys={[467, 475, 487, 499, 507]} />
      <Polylines lines={KDJ_LINES} />
    </Panel>
    <Panel
      top={517}
      height={73}
      heightClass="h-[74px]"
      axis={[["0.8", 545]]}
      legend={[["QHLSR", "text-[#c0c0c0]"], ["QHL5:0.5761", "text-white"], ["QHL10:0.5", "text-[#ffff00]"]]}
    >
      <GridLines ys={[544]} color="#b00808" />
      <Polylines lines={QHL_LINES} />
    </Panel>
    <Panel
      top={591}
      height={78}
      heightClass="h-[79px]"
      axis={[["100", 623], ["0", 634], ["-100", 645]]}
      legend={[["CCI(14)", "text-[#c0c0c0]"], ["29.9180", "text-white"]]}
    >
      <GridLines ys={[622, 633, 644]} />
      <Polylines lines={CCI_LINES} />
    </Panel>
    <div className="flex h-[15px] text-[12px] leading-[15px] text-[#e8e8e8]">
      <div className="w-[62px] shrink-0 border-r border-[#c81414] pr-1 text-right">日线</div>
      <svg className="h-full min-w-0 flex-1" viewBox="71 670 1041 15" preserveAspectRatio="xMinYMid meet">
        {DATES.map(([label, x]) => (
          <text key={label} x={x} y="681" fill="#f0f0f0" className="font-[Liberation_Sans] text-[11px]">
            {label}
          </text>
        ))}
      </svg>
    </div>
    <TipBox />
  </main>
);

const DepthTable: React.FC<{ rows: string[][]; label: string }> = ({ rows, label }) => (
  <table aria-label={label} className="w-full table-fixed border-b border-[#c81414]">
    <tbody>
      {rows.map(([name, price, size]) => {
        const best = name.endsWith("一");
        return (
          <tr key={name} className={best ? "h-[30px]" : "h-5"}>
            <th scope="row" className="w-12 p-0 pl-1 text-left text-[14px] leading-5 font-normal text-[#e8e8e8]">{name}</th>
            <td className={`w-[65px] p-0 text-right font-[Liberation_Sans] leading-5 font-bold text-[#ff3c3c] ${best ? "text-[22px]" : "text-[14px]"}`}>
              {price}
            </td>
            <td className={`p-0 pl-[14px] font-[Liberation_Sans] leading-5 font-bold text-[#ffff00] ${best ? "text-[22px]" : "text-[14px]"}`}>
              {size}
            </td>
          </tr>
        );
      })}
    </tbody>
  </table>
);

const QuotePanel: React.FC = () => (
  <aside className="flex w-[243px] shrink-0 flex-col border-r-2 border-l border-l-[#c81414] border-r-[#d8d0d0]">
    <h2 className="h-[25px] pr-4 text-center font-[Liberation_Serif,'Noto_Sans_CJK_SC',serif] text-[20px] leading-[25px] font-light text-[#e8e800]">
      螺纹1910(rb1910)
    </h2>
    <div className="flex h-[5px] border-b border-[#c81414]">
      <div className="w-[31%] bg-[#ff3c3c]" />
      <div className="flex-1 bg-[#00f000]" />
    </div>
    <DepthTable rows={SELLS} label="卖盘" />
    <DepthTable rows={BUYS} label="买盘" />
    <table aria-label="行情" className="w-full table-fixed border-b border-[#c81414]">
      <tbody>
        {STATS.map(([l1, v1, c1, l2, v2, c2]) => (
          <tr key={l1} className="h-5">
            <th scope="row" className="w-12 p-0 pl-1 text-left text-[14px] leading-5 font-normal text-[#e8e8e8]">{l1}</th>
            <td className={`w-[65px] p-0 text-right font-[Liberation_Sans] text-[14px] leading-5 font-bold ${c1}`}>{v1}</td>
            <th scope="row" className="w-[50px] p-0 pl-[14px] text-left text-[14px] leading-5 font-normal text-[#e8e8e8]">{l2}</th>
            <td className={`p-0 pr-[5px] text-right font-[Liberation_Sans] text-[14px] leading-5 font-bold ${c2}`}>{v2}</td>
          </tr>
        ))}
      </tbody>
    </table>
    <table className="w-full table-fixed text-right text-[14px] leading-[22px]">
      <thead>
        <tr className="h-[22px] text-[#808080]">
          <th scope="col" className="w-10 p-0 pl-1 text-left font-normal">北京</th>
          <th scope="col" className="w-16 p-0 font-normal">价格</th>
          <th scope="col" className="w-12 p-0 font-normal whitespace-nowrap">√大单</th>
          <th scope="col" className="w-12 p-0 font-normal">仓差</th>
          <th scope="col" className="p-0 pr-1 font-normal">性质</th>
        </tr>
      </thead>
      <tbody>
        {TICKS.map(([time, price, size, sizeColor, diff, kind, kindColor]) => (
          <tr key={time + size} className="h-[22px] font-[Liberation_Sans] font-bold">
            <td className={`p-0 text-[#e8e8e8] ${time.length > 3 ? "" : "pr-0.5 text-[11px] font-normal"}`}>{time}</td>
            <td className="p-0 text-[#ff3c3c]">{price}</td>
            <td className={`p-0 ${sizeColor}`}>{size}</td>
            <td className="p-0 text-[#ffff00]">{diff}</td>
            <td className={`p-0 pr-1 font-['Noto_Sans_CJK_SC'] font-normal ${kindColor}`}>{kind}</td>
          </tr>
        ))}
      </tbody>
    </table>
    <div className="mt-auto flex">
      <button type="button" className="h-4 w-[37px] rounded-br border-r border-b border-[#c81414] text-[12px] leading-[15px] text-white">
        笔
      </button>
      <div className="flex-1 border-t border-[#c81414]" />
    </div>
  </aside>
);

const FIELDS: [string, string, boolean?][] = [
  ["起始时间", "2019-03-28", true],
  ["结束时间", "2019-05-08", true],
  ["期初价", "3430"],
  ["最高价", "3843"],
  ["最低价", "3380"],
  ["期末价", "3731"],
  ["成交量", "84990656"],
  ["仓差", "706796"],
  ["加权均价", "3733"],
  ["区间涨幅", "+9.25%"],
  ["区间振幅", "13.56%"],
];

const Dialog: React.FC = () => (
  <div
    role="dialog"
    aria-labelledby="range-title"
    className="absolute top-[235px] left-[252px] flex w-[322px] flex-col rounded-md border border-[#e8c0d8] bg-linear-to-b from-[#a85088] via-[#d8b8cc] via-30% to-[#780048] to-31% px-[5px] pb-[5px] shadow-[0_0_0_1px_#380018]"
  >
    <div className="-mx-[5px] flex h-[27px] items-center rounded-t-md bg-linear-to-r from-[#c088a8] via-[#880050] via-50% to-[#b06898] pl-1.5">
      <h2
        id="range-title"
        className="text-[12px] text-[#100008] [text-shadow:0_0_6px_#f4d8e8,0_0_8px_#f4d8e8]"
      >
        螺纹1910 区间统计
      </h2>
      <button
        type="button"
        aria-label="关闭窗口"
        className="mr-1 ml-auto flex h-[19px] w-12 items-center justify-center self-start rounded-b border border-t-0 border-[#f0c8c8] bg-linear-to-b from-[#e09888] via-[#c03020] via-50% to-[#e07060]"
      >
        <svg viewBox="0 0 12 10" className="h-[10px] w-3">
          <path d="M2 1l8 8M10 1l-8 8" stroke="#505868" strokeWidth="4" />
          <path d="M2 1l8 8M10 1l-8 8" stroke="#fff" strokeWidth="2.5" />
        </svg>
      </button>
    </div>
    <form className="border border-[#500828] bg-[#f0f0f0] pt-3 pb-3 text-[12px] text-black outline-1 outline-[#e0a8c8]">
      <div className="grid auto-rows-[20px] grid-cols-[80px_120px_92px] gap-x-0 gap-y-1">
        {FIELDS.map(([label, value, spin], i) => (
          <React.Fragment key={label}>
            <label htmlFor={`field-${i}`} className="text-right leading-[22px]">
              {label}
            </label>
            <div className="ml-3 flex w-[120px] border border-[#7f9db9] bg-white">
              <input
                id={`field-${i}`}
                type="text"
                defaultValue={value}
                className="w-full min-w-0 flex-1 pl-0.5 font-['DejaVu_Sans_Mono'] text-[10px] leading-[17px] outline-none"
              />
              {spin && (
                <div className="flex w-4 shrink-0 flex-col bg-[#b8d0fc]">
                  <button type="button" aria-label="增加" className="flex flex-1 items-center justify-center">
                    <svg viewBox="0 0 7 4" className="h-1 w-[7px]"><path d="M0 4l3.5 -4l3.5 4z" fill="#4c6490" /></svg>
                  </button>
                  <button type="button" aria-label="减少" className="flex flex-1 items-center justify-center">
                    <svg viewBox="0 0 7 4" className="h-1 w-[7px]"><path d="M0 0l3.5 4l3.5 -4z" fill="#4c6490" /></svg>
                  </button>
                </div>
              )}
            </div>
            <span className="pl-6 text-center leading-[22px]">{i === 6 ? "分析周期" : i === 7 ? "共26个" : ""}</span>
          </React.Fragment>
        ))}
      </div>
      <div className="mt-1 mr-4 flex justify-end">
        <button
          type="button"
          className="h-5 w-[65px] rounded-sm border border-[#003c74] bg-linear-to-b from-white to-[#e4e4dc] leading-[18px] outline-1 -outline-offset-3 outline-black outline-dotted"
        >
          关闭
        </button>
      </div>
    </form>
  </div>
);

const Logo: React.FC = () => (
  <div className="absolute top-2 right-1 flex items-center gap-1">
    <svg viewBox="0 0 30 30" className="size-[30px]">
      <rect width="30" height="30" rx="3" fill="#e85a1c" />
      <circle cx="15" cy="15" r="11" fill="none" stroke="#fff" strokeWidth="2.5" />
      <path d="M10 10h10M6 16h18M9 21h12M15 10v11" fill="none" stroke="#fff" strokeWidth="2.5" />
    </svg>
    <div className="w-[69px] whitespace-nowrap text-[#e85a1c]">
      <div className="flex items-center font-[Lato,'Noto_Sans_CJK_SC'] text-[24px] leading-[17px] font-medium">
        5e<span className="text-[17px] font-black">天资</span>
      </div>
      <div className="font-[Lato] text-[16px] leading-[13px] font-bold text-white [text-shadow:0_0_1px_#e85a1c,1px_0_0_#e85a1c]">5etz.com</div>
    </div>
  </div>
);

const Taskbar: React.FC = () => (
  <footer className="flex h-[7px] bg-linear-to-b from-[#c8c8c8] to-[#b8b8b8] pl-[38px]">
    <svg viewBox="0 0 206 10" className="-mt-[3px] h-[10px] w-[206px]">
      <path d="M22 3h184v7H22z" fill="#fff" />
      <path d="M0 3l20 -3l3 3v7H1z" fill="#f0602c" />
      <path d="M18 4q-12 -1 -11 4l8 2" fill="none" stroke="#fff" strokeWidth="2" />
      <g fill="none" stroke="#2c7cc8" strokeWidth="1.5">
        <path d="M34 8h12M40 6v4M58 7l3 3M77 10q7 -6 14 0M121 8h14v2M167 8h10M170 6v4M175 6v4M188 10V7h5v3M196 10V6h6v4" />
      </g>
      <circle cx="106" cy="8" r="2.5" fill="#2c7cc8" />
      <circle cx="150" cy="9" r="2.5" fill="#b0b8d0" />
    </svg>
  </footer>
);

const App: React.FC = () => (
  <div className="relative flex min-h-screen flex-col overflow-hidden bg-black font-['DejaVu_Sans_Condensed','Noto_Sans_CJK_SC',sans-serif]">
    <Toolbar />
    <div className="flex flex-1">
      <SideTabs />
      <ChartArea />
      <QuotePanel />
    </div>
    <Taskbar />
    <Dialog />
    <Logo />
  </div>
);

export default App;
